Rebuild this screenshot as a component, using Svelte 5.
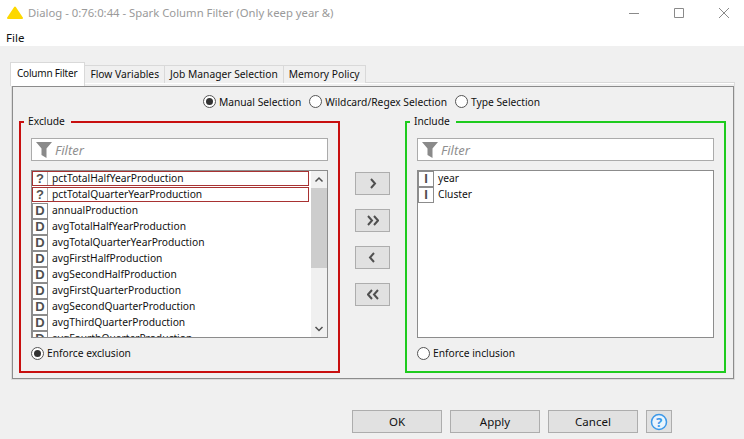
<script>
	const tabs = ['Column Filter', 'Flow Variables', 'Job Manager Selection', 'Memory Policy'];
	const modes = [
		{ label: 'Manual Selection', on: true },
		{ label: 'Wildcard/Regex Selection', on: false },
		{ label: 'Type Selection', on: false }
	];
	const excluded = [
		{ type: '?', name: 'pctTotalHalfYearProduction', bad: true },
		{ type: '?', name: 'pctTotalQuarterYearProduction', bad: true },
		{ type: 'D', name: 'annualProduction' },
		{ type: 'D', name: 'avgTotalHalfYearProduction' },
		{ type: 'D', name: 'avgTotalQuarterYearProduction' },
		{ type: 'D', name: 'avgFirstHalfProduction' },
		{ type: 'D', name: 'avgSecondHalfProduction' },
		{ type: 'D', name: 'avgFirstQuarterProduction' },
		{ type: 'D', name: 'avgSecondQuarterProduction' },
		{ type: 'D', name: 'avgThirdQuarterProduction' },
		{ type: 'D', name: 'avgFourthQuarterProduction' }
	];
	const included = [
		{ type: 'I', name: 'year' },
		{ type: 'I', name: 'Cluster' }
	];
	const moves = ['M4 1l4 4.500L4 10', 'M1 1l4 4.500L1 10M7 1l4 4.500L7 10', 'M7 1L3 5.500 7 10', 'M5 1L1 5.500 5 10M11 1L7 5.500 11 10'];
</script>

{#snippet radio(on)}
	<span class="radio" class:on></span>
{/snippet}

{#snippet filter()}
	<div class="filter">
		<svg width="16" height="16" viewBox="0 0 16 16"><path d="M0 0h16l-5.500 6.500V16L5.500 13V6.500z" fill="#8a8a8a" /></svg>
		<span>Filter</span>
	</div>
{/snippet}

{#snippet row(c)}
	<div class="row" class:bad={c.bad}>
		<span class="type">{c.type}</span>
		<span class="name">{c.name}</span>
	</div>
{/snippet}

<div class="window">
	<header class="titlebar">
		<svg class="logo" width="16" height="13" viewBox="0 0 16 13"><path d="M8 1.500L15 12H1z" fill="#fdd800" stroke="#fdd800" stroke-width="2" stroke-linejoin="round" /></svg>
		<span class="title">Dialog - 0:76:0:44 - Spark Column Filter (Only keep year &amp;)</span>
		<div class="controls">
			<svg width="12" height="12" viewBox="0 0 12 12"><path d="M1 6.500h10" stroke="#8a8a8a" fill="none" /></svg>
			<svg width="12" height="12" viewBox="0 0 12 12"><path d="M1.500 1.500h9v9h-9z" stroke="#8a8a8a" fill="none" /></svg>
			<svg width="12" height="12" viewBox="0 0 12 12"><path d="M1 1l10 10M11 1L1 11" stroke="#8a8a8a" fill="none" /></svg>
		</div>
	</header>
	<nav class="menubar">File</nav>

	<main class="content">
		<div class="tabs">
			{#each tabs as t, i}
				<div class="tab" class:active={i === 0}>{t}</div>
			{/each}
		</div>
		<div class="frame">
			<section class="pane">
				<div class="modes">
					{#each modes as m}
						<label class="option">{@render radio(m.on)}{m.label}</label>
					{/each}
				</div>
				<div class="columns">
					<fieldset class="group exclude">
						<legend>Exclude</legend>
						{@render filter()}
						<div class="list">
							<div class="rows">
								{#each excluded as c}
									{@render row(c)}
								{/each}
							</div>
							<div class="scrollbar">
								<svg width="16" height="17" viewBox="0 0 16 17"><path d="M4.500 10.500l3.500-3.500 3.500 3.500" stroke="#505050" stroke-width="1.500" fill="none" /></svg>
								<div class="track"><div class="thumb"></div></div>
								<svg width="16" height="17" viewBox="0 0 16 17"><path d="M4.500 7l3.500 3.500 3.500-3.500" stroke="#505050" stroke-width="1.500" fill="none" /></svg>
							</div>
						</div>
						<label class="option enforce">{@render radio(true)}Enforce exclusion</label>
					</fieldset>

					<div class="moves">
						{#each moves as d}
							<button class="move">
								<svg width="12" height="11" viewBox="0 0 12 11"><path {d} stroke="#505050" stroke-width="2" fill="none" /></svg>
							</button>
						{/each}
					</div>

					<fieldset class="group include">
						<legend>Include</legend>
						{@render filter()}
						<div class="list">
							<div class="rows">
								{#each included as c}
									{@render row(c)}
								{/each}
							</div>
						</div>
						<label class="option enforce">{@render radio(false)}Enforce inclusion</label>
					</fieldset>
				</div>
			</section>
		</div>

		<footer class="actions">
			<button>OK</button>
			<button>Apply</button>
			<button>Cancel</button>
			<button class="help">
				<svg width="18" height="18" viewBox="0 0 18 18">
					<circle cx="9" cy="9" r="7.500" fill="#eaf4fd" stroke="#3c98e8" stroke-width="1.500" />
					<text x="9" y="13.500" text-anchor="middle" font-size="13" font-weight="700" fill="#3c98e8">?</text>
				</svg>
			</button>
		</footer>
	</main>
</div>

<style>
	:global(body) {
		background: #f0f0f0;
	}

	.window {
		width: 744px;
		height: 439px;
		overflow: hidden;
		font-family: 'Noto Sans', sans-serif;
		font-size: 10.25px;
		color: #111;
		background: #f0f0f0;
	}

	.titlebar {
		display: flex;
		align-items: center;
		height: 25px;
		background: #fff;
		padding-left: 7px;
	}
	.title {
		margin-left: 5px;
		font-size: 11.3px;
		color: #9a9a9a;
	}
	.controls {
		display: flex;
		gap: 33px;
		margin-left: auto;
		margin-right: 14px;
	}
	.menubar {
		box-sizing: border-box;
		height: 21px;
		padding: 2px 0 0 6px;
		background: #fff;
		font-size: 11.5px;
		line-height: 21px;
	}

	.content {
		padding: 16px 0 0 10px;
	}

	.tabs {
		position: relative;
		z-index: 1;
		display: flex;
		align-items: flex-start;
		height: 24px;
		margin-bottom: -4px;
	}
	.tab {
		margin-top: 3px;
		padding: 0 5px;
		height: 17px;
		line-height: 17px;
		background: #f0f0f0;
		border: 1px solid #d9d9d9;
		border-left: 0;
		border-bottom: 0;
	}
	.tab.active {
		margin-top: 0;
		padding: 0 7px 0 6px;
		height: 23px;
		line-height: 20px;
		background: #fff;
		border: 1px solid #d9d9d9;
		border-bottom: 0;
		font-size: 10px;
		letter-spacing: -0.2px;
	}

	.frame {
		box-sizing: border-box;
		width: 724px;
		height: 298px;
		margin-left: 1px;
		padding-top: 3px;
		border: 1px solid #dcdcdc;
		border-top-color: #d9d9d9;
		box-shadow: inset 0 1px 0 #fff;
	}
	.pane {
		box-sizing: border-box;
		height: 293px;
		border: 1px solid #8c8c8c;
		padding: 7px 6px 0;
	}
	.modes {
		display: flex;
		justify-content: center;
		gap: 8px;
		height: 15px;
		padding-right: 3px;
		align-items: center;
	}
	.option {
		display: flex;
		align-items: center;
		gap: 3px;
	}
	.radio {
		box-sizing: border-box;
		width: 13px;
		height: 13px;
		border: 1px solid #555;
		border-radius: 50%;
		background: #fff;
		display: grid;
		place-items: center;
	}
	.radio.on::after {
		content: '';
		width: 7px;
		height: 7px;
		border-radius: 50%;
		background: #333;
	}

	.columns {
		display: flex;
		margin-top: 6px;
	}
	.group {
		box-sizing: border-box;
		width: 321px;
		height: 258px;
		margin: 0;
		padding: 10px 10px 0;
		border: 2px solid;
		min-width: 0;
	}
	.group legend {
		padding: 0 6px 0 4px;
		margin-left: -7px;
		line-height: 13px;
	}
	.exclude {
		border-color: #c80f0f;
	}
	.include {
		border-color: #1ecb1e;
	}

	.filter {
		box-sizing: border-box;
		display: flex;
		align-items: center;
		gap: 3px;
		height: 23px;
		padding-left: 4px;
		background: #fff;
		border: 1px solid #ababab;
		font-style: italic;
		font-size: 13px;
		color: #8f8f8f;
	}

	.list {
		box-sizing: border-box;
		display: flex;
		height: 168px;
		margin-top: 9px;
		background: #fff;
		border: 1px solid #8c8c8c;
		overflow: hidden;
	}
	.rows {
		flex: 1;
		min-width: 0;
	}
	.row {
		box-sizing: border-box;
		display: flex;
		height: 16px;
		line-height: 14px;
		white-space: nowrap;
	}
	.type {
		box-sizing: border-box;
		flex: none;
		width: 16px;
		height: 16px;
		margin-right: 4px;
		border: 1px solid #8c8c8c;
		text-align: center;
		font-family: 'Liberation Sans', sans-serif;
		font-size: 13px;
		font-weight: 700;
		line-height: 14px;
		color: #505050;
	}
	.row.bad {
		height: 15px;
		margin: 0 2px 1px 0;
		border: 1px solid #a83232;
		line-height: 12px;
	}
	.row.bad .type {
		width: 15px;
		height: 13px;
		margin-right: 4px;
		border: 0;
		border-right: 1px solid #b0b0b0;
		line-height: 13px;
	}

	.scrollbar {
		flex: none;
		display: flex;
		flex-direction: column;
		width: 16px;
		background: #f0f0f0;
	}
	.track {
		flex: 1;
	}
	.thumb {
		height: 80px;
		background: #cdcdcd;
	}

	.enforce {
		margin-top: 7px;
		height: 16px;
	}

	.moves {
		flex: none;
		width: 65px;
		display: flex;
		flex-direction: column;
		align-items: center;
		gap: 14px;
		padding-top: 57px;
	}
	button {
		box-sizing: border-box;
		font: inherit;
		color: inherit;
		background: #e1e1e1;
		border: 1px solid #adadad;
		padding: 0;
		height: 23px;
	}
	.move {
		width: 35px;
		display: grid;
		place-items: center;
	}

	.actions {
		display: flex;
		gap: 8px;
		margin-top: 30px;
		margin-left: 342px;
	}
	.actions button {
		width: 90px;
		font-size: 11.5px;
	}
	.actions .help {
		width: 26px;
		display: grid;
		place-items: center;
	}
</style>
